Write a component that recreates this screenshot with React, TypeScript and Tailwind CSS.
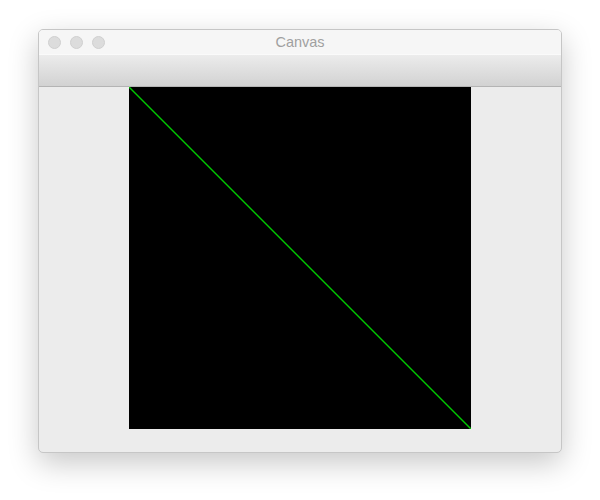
import React from 'react';

const TrafficLight: React.FC = () => <div className="w-[13px] h-[13px] rounded-full bg-[#dcdcdc] border border-[#d0d0d0]" />;

const App: React.FC = () => {
  return (
    <div className="w-[600px] h-[500px] bg-white pt-[29px] pl-[38px]" style={{ fontFamily: '"Liberation Sans", Arial, sans-serif' }}>
      <div className="w-[524px] h-[424px] flex flex-col rounded-[5px] border border-[#c6c6c6] bg-[#ececec] overflow-hidden shadow-[0_10px_30px_rgba(0,0,0,0.22)]">
        {/* title bar */}
        <div className="relative h-[24px] flex items-center bg-[#f6f6f6] pl-[9px] gap-[9px]">
          <TrafficLight />
          <TrafficLight />
          <TrafficLight />
          <span className="absolute inset-0 pt-[2px] flex items-center justify-center text-[14.5px] text-[#a0a0a0]">Canvas</span>
        </div>
        {/* toolbar */}
        <div className="h-[33px] border-t border-[#fafafa] border-b border-b-[#b4b4b4] bg-gradient-to-b from-[#ececec] to-[#d2d2d2]" />
        {/* content */}
        <div className="flex-1 flex justify-center">
          <div className="w-[342px] h-[342px] bg-black">
            <svg width="342" height="342" viewBox="0 0 342 342">
              <line x1="0" y1="0" x2="342" y2="342" stroke="#00c800" strokeWidth="1.4" />
            </svg>
          </div>
        </div>
      </div>
    </div>
  );
};

export default App;
